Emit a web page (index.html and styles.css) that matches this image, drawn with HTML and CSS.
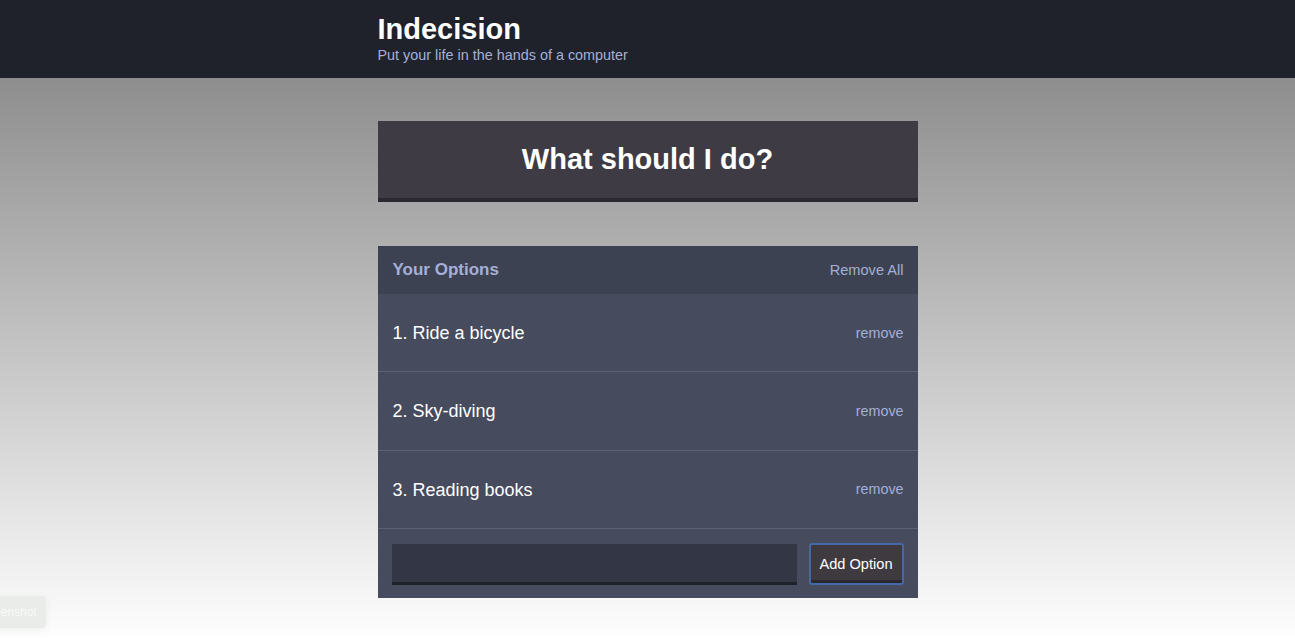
FILE: index.html
```html
<!DOCTYPE html>
<html lang="en">
<head>
<meta charset="utf-8">
<title>Indecision</title>
<link rel="stylesheet" href="styles.css">
</head>
<body>
<header class="header">
  <div class="container">
    <h1 class="header__title">Indecision</h1>
    <h2 class="header__subtitle">Put your life in the hands of a computer</h2>
  </div>
</header>
<main class="container main">
  <button class="big-button">What should I do?</button>
  <section class="widget">
    <div class="widget-header">
      <h3 class="widget-header__title">Your Options</h3>
      <button class="button--link">Remove All</button>
    </div>
    <div class="option">
      <p class="option__text">1. Ride a bicycle</p>
      <button class="button--link button--small">remove</button>
    </div>
    <div class="option">
      <p class="option__text">2. Sky-diving</p>
      <button class="button--link button--small">remove</button>
    </div>
    <div class="option">
      <p class="option__text">3. Reading books</p>
      <button class="button--link button--small">remove</button>
    </div>
    <form class="add-option">
      <input class="add-option__input" type="text" name="option">
      <button class="button" type="button">Add Option</button>
    </form>
  </section>
</main>
<div class="shot-badge">Screenshot</div>
</body>
</html>
```

FILE: styles.css
```css
* { box-sizing: border-box; }
html, body { margin: 0; padding: 0; }
body {
  font-family: "Liberation Sans", Arial, sans-serif;
  min-height: 100vh;
  background: linear-gradient(to bottom, #7e7e7e 0%, #fefefe 100%);
  color: #fff;
  overflow: hidden;
}
.container {
  width: 540px;
  margin: 0 auto;
}
.header {
  background: #20222b;
  height: 78px;
  padding-top: 12px;
}
.header__title {
  margin: 0;
  font-size: 29px;
  line-height: 34px;
  font-weight: bold;
  color: #fff;
}
.header__subtitle {
  margin: 0;
  font-size: 14.4px;
  line-height: 18px;
  font-weight: normal;
  color: #a5afd7;
}
.main {
  padding-top: 43px;
}
.big-button {
  display: block;
  width: 100%;
  height: 81px;
  margin: 0 0 44px;
  border: none;
  border-bottom: 4px solid #2a292f;
  background: #3f3b44;
  color: #fff;
  font-family: "Liberation Sans", Arial, sans-serif;
  font-size: 29px;
  font-weight: bold;
  padding: 0;
}
.widget {
  background: #464b5e;
}
.widget-header {
  display: flex;
  justify-content: space-between;
  align-items: center;
  height: 48px;
  padding: 0 14px 0 15px;
  background: #3c4251;
}
.widget-header__title {
  margin: 0;
  font-size: 17px;
  font-weight: bold;
  color: #a5afd7;
}
.button--link {
  background: none;
  border: none;
  padding: 0;
  color: #a5afd7;
  font-family: "Liberation Sans", Arial, sans-serif;
  font-size: 14.6px;
}
.button--small {
  font-size: 14.3px;
}
.option {
  display: flex;
  justify-content: space-between;
  align-items: center;
  height: 78.3px;
  padding: 0 14px 0 15px;
  border-bottom: 1px solid #5b6073;
}
.option__text {
  margin: 2px 0 0;
  font-size: 18px;
  color: #fff;
}
.add-option {
  display: flex;
  align-items: center;
  height: 69.5px;
  padding: 0 14px;
  gap: 12px;
}
.add-option__input {
  flex: 1;
  height: 41px;
  margin-top: 1px;
  background: #333645;
  border: none;
  border-bottom: 3px solid #20222b;
  color: #a5afd7;
  outline: none;
}
.button {
  width: 95px;
  height: 42px;
  padding: 0;
  background: #3f3a40;
  color: #fff;
  border: 2px solid #4468a8;
  border-radius: 3px;
  box-shadow: inset 0 -3px 0 #2a292f;
  font-family: "Liberation Sans", Arial, sans-serif;
  font-size: 14.6px;
}
.shot-badge {
  position: absolute;
  left: -30px;
  top: 596px;
  width: 76px;
  height: 32px;
  line-height: 32px;
  padding-left: 6px;
  background: #e9ece9;
  border-radius: 4px;
  color: #f8faf8;
  font-size: 12px;
  white-space: nowrap;
  overflow: hidden;
  box-shadow: 0 2px 8px rgba(0,0,0,0.06);
}
```
